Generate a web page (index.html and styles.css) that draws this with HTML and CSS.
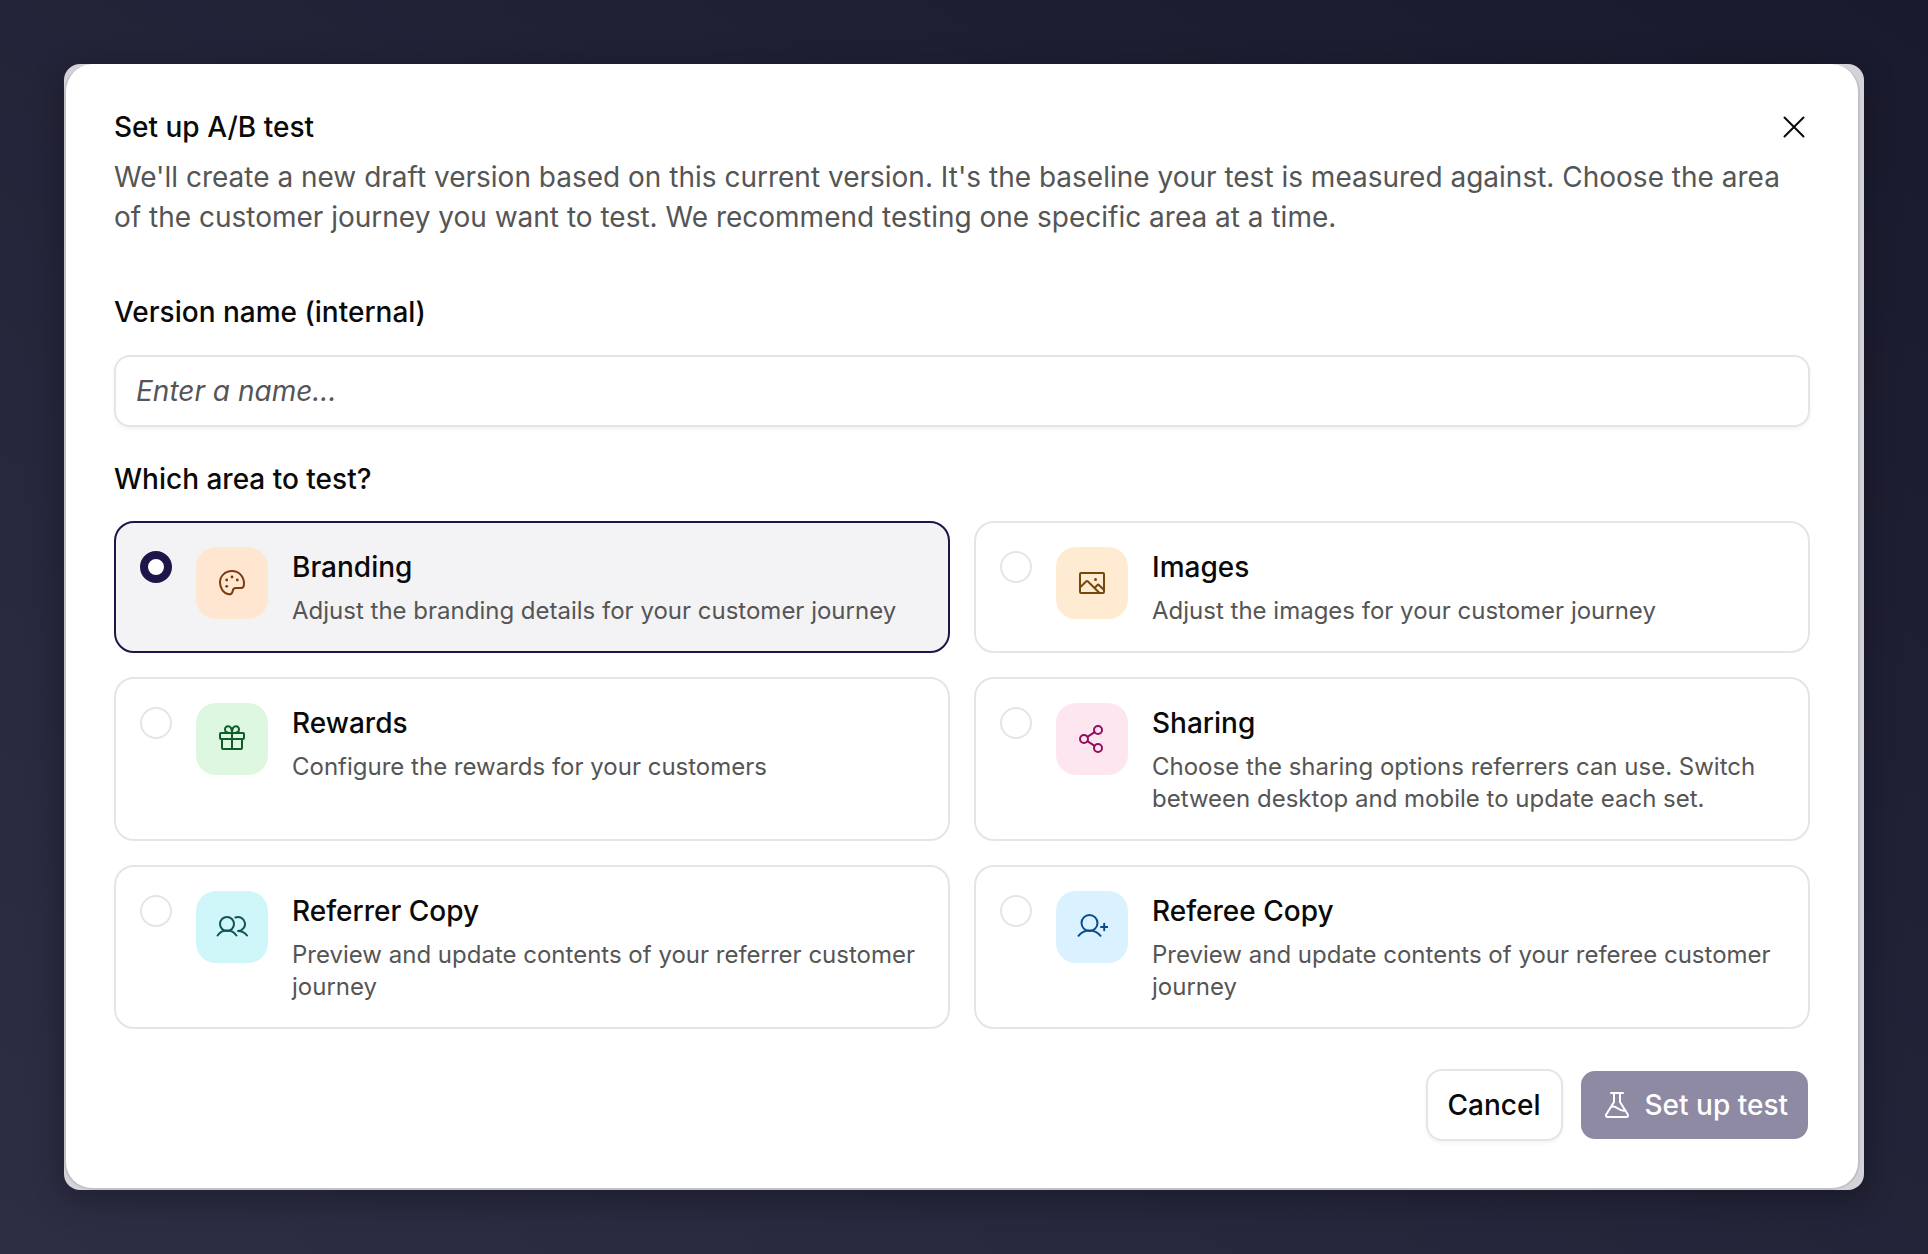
FILE: index.html
```
<!DOCTYPE html>
<html lang="en">
<head>
  <meta charset="UTF-8">
  <meta name="viewport" content="width=device-width, initial-scale=1.0">
  <title>Set up A/B test</title>
  <link rel="stylesheet" href="styles.css">
</head>
<body>
  <div class="frame">
    <form class="modal" role="dialog" aria-labelledby="modal-title">
      <header class="modal-header">
        <h1 id="modal-title">Set up A/B test</h1>
        <button type="button" class="close" aria-label="Close">
          <svg viewBox="0 0 32 32" width="32" height="32"><path d="M6.5 6.5l19 19M25.5 6.5l-19 19"/></svg>
        </button>
      </header>
      <p class="modal-description">We'll create a new draft version based on this current version. It's the baseline your test is measured against. Choose the area of the customer journey you want to test. We recommend testing one specific area at a time.</p>

      <label class="field-label" for="version-name">Version name (internal)</label>
      <input type="text" id="version-name" class="text-input" placeholder="Enter a name...">

      <fieldset class="areas">
        <legend class="field-label">Which area to test?</legend>
        <div class="area-grid">
          <label class="card">
            <input type="radio" name="area" value="branding" checked>
            <span class="card-icon branding">
              <svg viewBox="0 0 32 32" width="32" height="32"><path d="M16 4C9 4 4 9.200 4 15.500C4 22 8.300 26.500 12.500 27.200C15 27.600 16.300 26.300 16.600 24.300C16.900 22 18 21 20 21H25C27.200 21 28 19.700 28 16.500C28 9.500 22.900 4 16 4Z"/><g class="dots"><circle cx="16" cy="10" r="1.400"/><circle cx="10.700" cy="13" r="1.400"/><circle cx="10.700" cy="19.300" r="1.400"/><circle cx="21.300" cy="13" r="1.400"/></g></svg>
            </span>
            <span class="card-text">
              <span class="card-title">Branding</span>
              <span class="card-description">Adjust the branding details for your customer journey</span>
            </span>
          </label>
          <label class="card">
            <input type="radio" name="area" value="images">
            <span class="card-icon images">
              <svg viewBox="0 0 32 32" width="32" height="32"><rect x="4" y="6" width="24" height="20" rx="1"/><path d="M4 20.500l6.300-6.200a1 1 0 0 1 1.400 0L23.500 26M18.500 21l3-3a1 1 0 0 1 1.400 0l5.100 5"/><g class="dots"><circle cx="19.500" cy="12.500" r="1.500"/></g></svg>
            </span>
            <span class="card-text">
              <span class="card-title">Images</span>
              <span class="card-description">Adjust the images for your customer journey</span>
            </span>
          </label>
          <label class="card">
            <input type="radio" name="area" value="rewards">
            <span class="card-icon rewards">
              <svg viewBox="0 0 32 32" width="32" height="32"><rect x="4" y="10" width="24" height="6" rx="1"/><path d="M26 16v9a1 1 0 0 1-1 1H7a1 1 0 0 1-1-1v-9M16 10v16M16 10c-4.500 0-7-.800-7-3.600C9 4.500 10.300 3.300 12 3.300C14.800 3.300 16 6 16 10ZM16 10c4.500 0 7-.800 7-3.600C23 4.500 21.700 3.300 20 3.300C17.200 3.300 16 6 16 10Z"/></svg>
            </span>
            <span class="card-text">
              <span class="card-title">Rewards</span>
              <span class="card-description">Configure the rewards for your customers</span>
            </span>
          </label>
          <label class="card">
            <input type="radio" name="area" value="sharing">
            <span class="card-icon sharing">
              <svg viewBox="0 0 32 32" width="32" height="32"><circle cx="8" cy="16" r="4"/><circle cx="22" cy="7" r="4"/><circle cx="22" cy="25" r="4"/><path d="M11.400 13.800l7.200-4.600M11.400 18.200l7.200 4.600"/></svg>
            </span>
            <span class="card-text">
              <span class="card-title">Sharing</span>
              <span class="card-description">Choose the sharing options referrers can use. Switch between desktop and mobile to update each set.</span>
            </span>
          </label>
          <label class="card">
            <input type="radio" name="area" value="referrer-copy">
            <span class="card-icon referrer">
              <svg viewBox="0 0 32 32" width="32" height="32"><circle cx="11" cy="13" r="7"/><path d="M1.600 24.500a11.500 11.500 0 0 1 18.800 0M19.400 6.500A7 7 0 1 1 22 20M22 20a11.500 11.500 0 0 1 9 4.500"/></svg>
            </span>
            <span class="card-text">
              <span class="card-title">Referrer Copy</span>
              <span class="card-description">Preview and update contents of your referrer customer journey</span>
            </span>
          </label>
          <label class="card">
            <input type="radio" name="area" value="referee-copy">
            <span class="card-icon referee">
              <svg viewBox="0 0 32 32" width="32" height="32"><circle cx="13.500" cy="12" r="8"/><path d="M2.500 24.800a14 14 0 0 1 22 0M25 16h6.500M28.200 12.700v6.600"/></svg>
            </span>
            <span class="card-text">
              <span class="card-title">Referee Copy</span>
              <span class="card-description">Preview and update contents of your referee customer journey</span>
            </span>
          </label>
        </div>
      </fieldset>

      <footer class="modal-footer">
        <button type="button" class="btn">Cancel</button>
        <button type="submit" class="btn btn-primary" disabled>
          <svg viewBox="0 0 32 32" width="32" height="32"><path d="M10 4h12M13 4v9L5.200 25.500A1.600 1.600 0 0 0 6.600 28h18.800a1.600 1.600 0 0 0 1.400-2.500L19 13V4M10 18c3-1.500 5 0 7 1.500s4.500 2.500 7.500 2"/></svg>
          Set up test
        </button>
      </footer>
    </form>
  </div>
</body>
</html>
```
FILE: styles.css
```
* {
  box-sizing: border-box;
}
body {
  margin: 0;
  min-height: 100vh;
  padding: 64px;
  background: linear-gradient(to top right, #2d2d44, #1a1a2e);
  font-family: Inter, "Liberation Sans", sans-serif;
  font-size: 28px;
  font-optical-sizing: none;
  line-height: 40px;
  color: #0a0a0a;
}
button, input {
  font: inherit;
  font-optical-sizing: none;
  color: inherit;
}
svg {
  fill: none;
  stroke: currentColor;
  stroke-width: 2;
  stroke-linecap: round;
  stroke-linejoin: round;
}

.frame {
  padding-right: 4px;
  border-radius: 16px;
  background: #d4d3da;
  box-shadow: 0 8px 32px rgba(0, 0, 0, 0.3);
  overflow: hidden;
}
.modal {
  padding: 49px 48px 47px;
  border: 2px solid #c2c1c7;
  border-top: 0;
  border-radius: 28px;
  background: #fff;
}
.modal-header {
  display: flex;
  justify-content: space-between;
  align-items: center;
  height: 28px;
}
h1, .field-label, .card-title {
  margin: 0;
  font-size: 28px;
  font-weight: 500;
}
.close {
  display: flex;
  padding: 0;
  border: 0;
  background: none;
  cursor: pointer;
}
.modal-description {
  margin: 16px 0 55px;
  color: #555;
}

.field-label {
  display: block;
  padding: 0;
}
.text-input {
  display: block;
  width: 100%;
  height: 72px;
  margin: 23px 0 32px;
  padding: 0 20px;
  border: 2px solid #e5e5e5;
  border-radius: 16px;
  background: #fff;
  box-shadow: 0 2px 4px rgba(0, 0, 0, 0.05);
}
.text-input::placeholder {
  color: #555;
  font-style: italic;
  opacity: 1;
}

.areas {
  margin: 0;
  padding: 0;
  border: 0;
  min-width: 0;
}
.area-grid {
  display: grid;
  grid-template-columns: 1fr 1fr;
  gap: 24px;
  margin-top: 22px;
}
.card {
  display: flex;
  align-items: flex-start;
  gap: 24px;
  padding: 24px;
  border: 2px solid #e5e5e5;
  border-radius: 20px;
  cursor: pointer;
}
.card:has(input:checked) {
  border-color: #1e1548;
  background: #f3f3f6;
}
.card input {
  appearance: none;
  flex: none;
  width: 32px;
  height: 32px;
  margin: 4px 0 0;
  border: 2px solid #e5e5e5;
  border-radius: 50%;
  background: #fff;
}
.card input:checked {
  border: 8px solid #1e1548;
}
.card-icon {
  display: flex;
  flex: none;
  align-items: center;
  justify-content: center;
  width: 72px;
  height: 72px;
  border-radius: 20px;
}
.dots {
  fill: currentColor;
  stroke: none;
}
.branding {
  background: #ffe6d0;
  color: #7c3a0a;
}
.images {
  background: #ffebd2;
  color: #734a08;
}
.rewards {
  background: #def7e0;
  color: #0d5c2b;
}
.sharing {
  background: #fee6f1;
  color: #920f5e;
}
.referrer {
  background: #cff7fa;
  color: #125357;
}
.referee {
  background: #daf1ff;
  color: #0b4a8c;
}
.card-title, .card-description {
  display: block;
}
.card-description {
  margin-top: 8px;
  font-size: 24px;
  line-height: 32px;
  color: #555;
}

.modal-footer {
  display: flex;
  justify-content: flex-end;
  gap: 16px;
  margin-top: 40px;
}
.btn {
  display: flex;
  align-items: center;
  gap: 12px;
  height: 72px;
  padding: 0 20px;
  border: 2px solid #e5e5e5;
  border-radius: 16px;
  background: #fff;
  font-weight: 500;
  box-shadow: 0 2px 4px rgba(0, 0, 0, 0.05);
  cursor: pointer;
}
.btn-primary {
  border-color: transparent;
  background: #8f8aa4 padding-box;
  color: #fff;
  box-shadow: none;
}
```
